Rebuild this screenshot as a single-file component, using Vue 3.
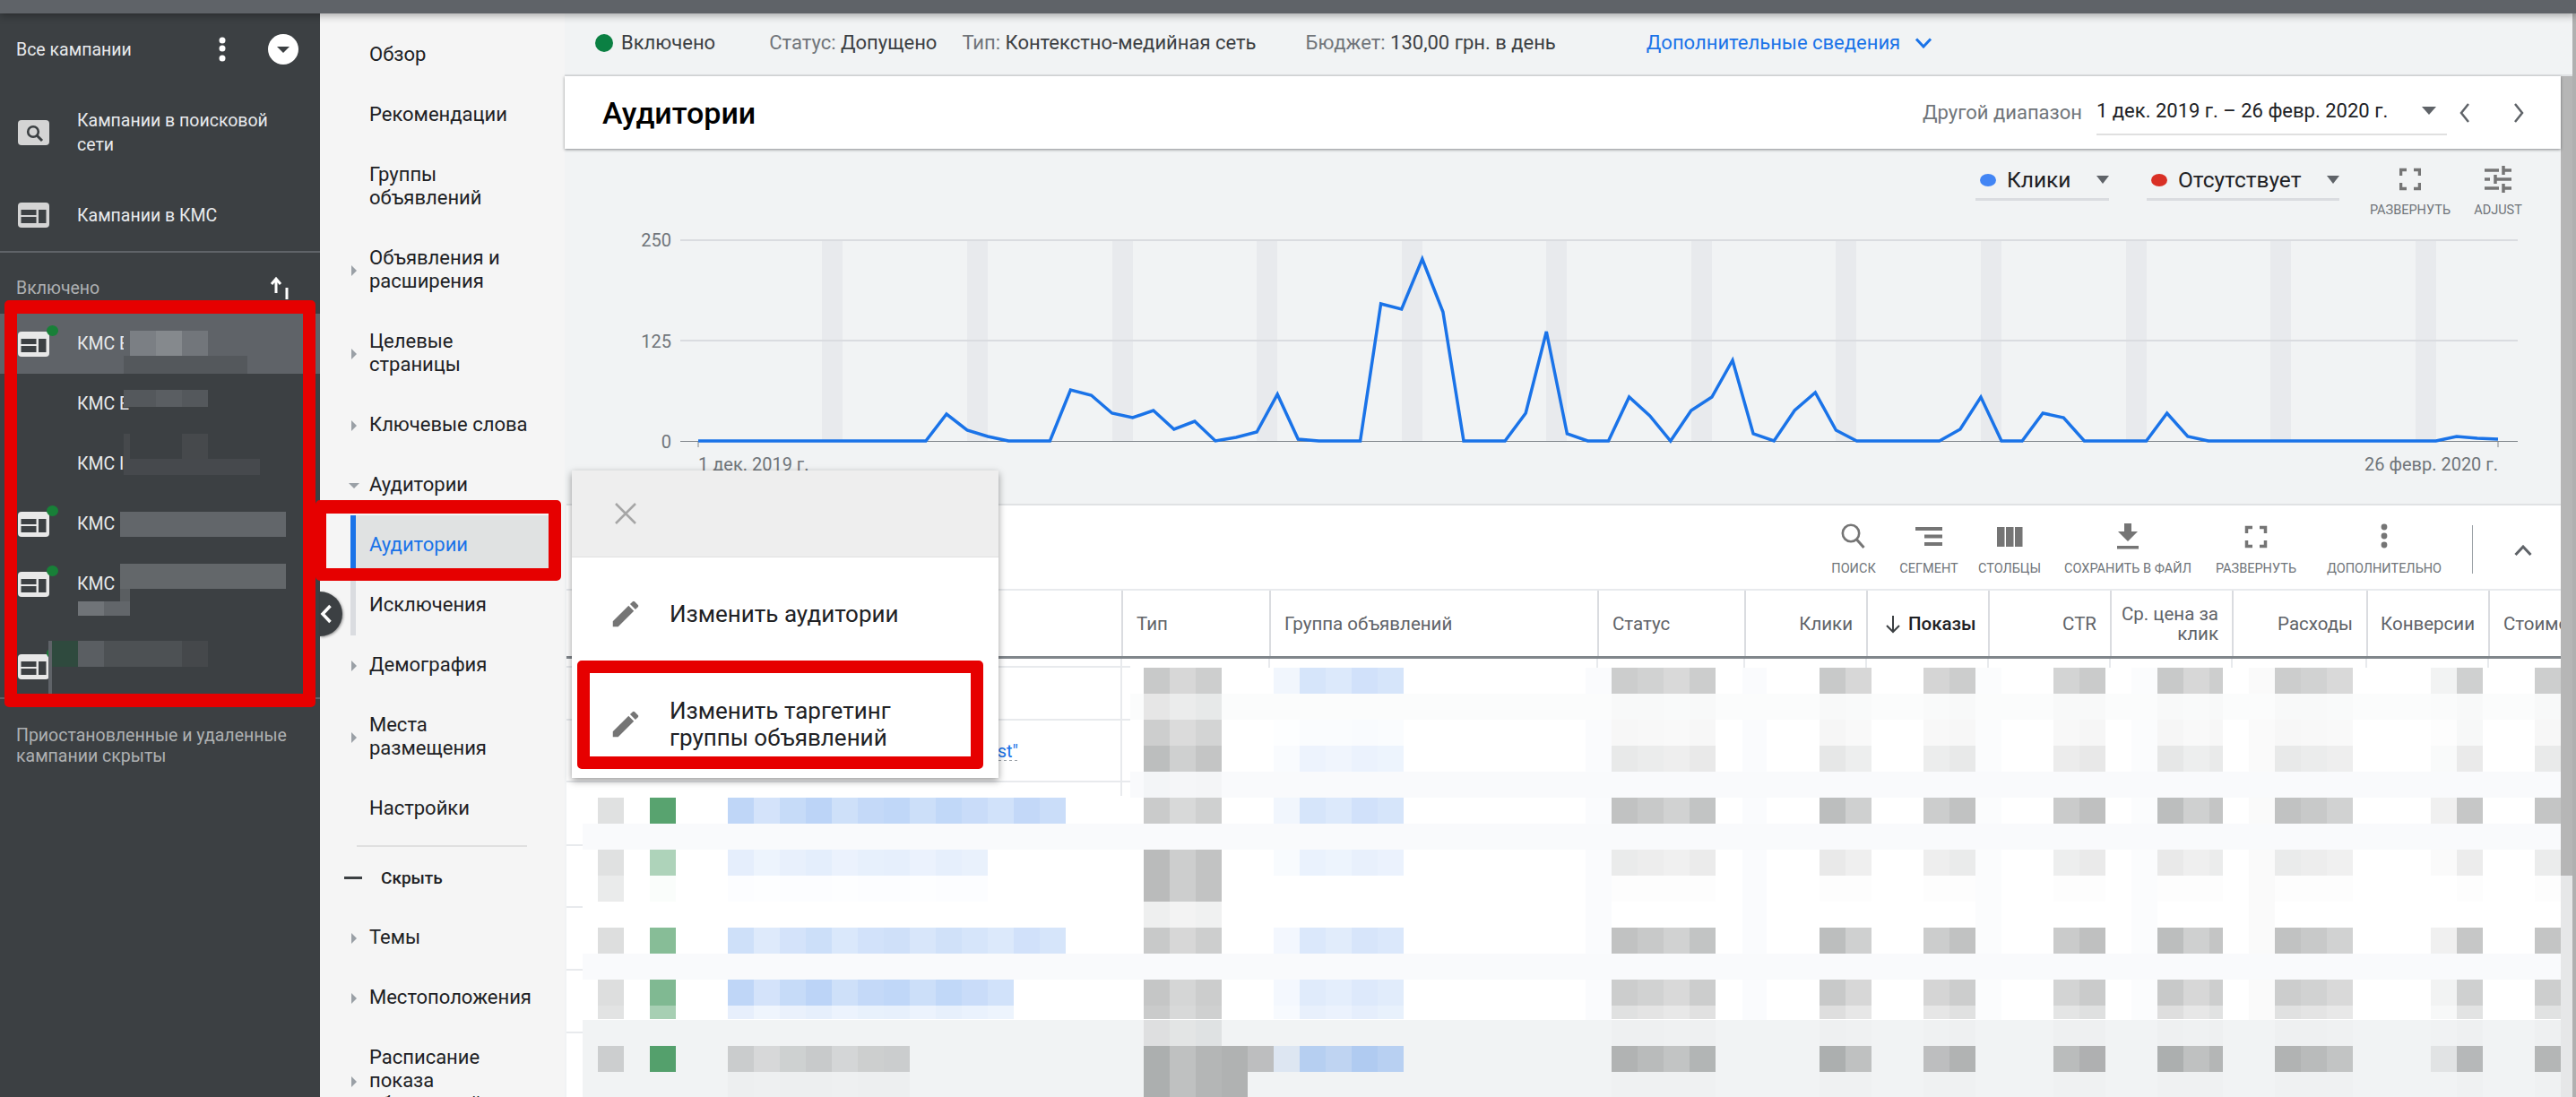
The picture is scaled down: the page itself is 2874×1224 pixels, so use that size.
<template>
  <div class="page">
    <div class="topbar"></div>
    <div class="body">
      <!-- левая панель кампаний -->
      <aside class="side">
        <div class="all-row">
          <span class="all-label">Все кампании</span>
          <svg class="kebab" width="8" height="28" viewBox="0 0 8 28"><circle cx="4" cy="4" r="3.5" /><circle cx="4" cy="13" r="3.5" /><circle cx="4" cy="24" r="3.5" /></svg>
          <span class="all-circle"><i></i></span>
        </div>
        <div class="type-row type-search">
          <svg class="camp-icon" width="35" height="28" viewBox="0 0 35 28">
            <rect width="35" height="28" rx="4" fill="#d4d4d4" />
            <circle cx="17" cy="13" r="5.8" fill="none" stroke="#3c4043" stroke-width="2.6" />
            <line x1="21" y1="17" x2="27" y2="23" stroke="#3c4043" stroke-width="3" />
          </svg>
          <span>Кампании в поисковой<br>сети</span>
        </div>
        <div class="type-row type-gdn">
          <svg class="camp-icon" width="35" height="28" viewBox="0 0 35 28">
            <rect width="35" height="28" rx="4" fill="#d4d4d4" />
            <path d="M3.5 8h17v6h-17zM3.5 16h17v7h-17zM23 8h8.5v15H23z" fill="#3c4043" />
          </svg>
          <span>Кампании в КМС</span>
        </div>
        <div class="enabled-row">
          <span>Включено</span>
          <svg width="26" height="28" viewBox="0 0 26 28"><path d="M7 19V5M2 9l5-6 5 6" fill="none" stroke="#fff" stroke-width="3" /><path d="M19 13v13" stroke="#fff" stroke-width="3" /></svg>
        </div>
        <div v-for="c in campaigns" :key="c.id" class="camp-row" :class="{ selected: c.selected, tall: c.tall }">
          <span class="camp-icon-wrap">
            <template v-if="c.icon">
              <svg class="camp-icon" width="35" height="28" viewBox="0 0 35 28">
                <rect width="35" height="28" rx="4" fill="#e8e8e8" />
                <path d="M3.5 8h17v6h-17zM3.5 16h17v7h-17zM23 8h8.5v15H23z" fill="#3c4043" />
              </svg>
              <i class="green-dot"></i>
            </template>
          </span>
          <span class="camp-name">{{ c.name }}</span>
        </div>
        <div class="paused-note">Приостановленные и удаленные кампании скрыты</div>
        <svg class="side-mosaic" width="357" height="500" viewBox="0 320 357 500">
          <rect v-for="(r, i) in sideCells" :key="i" :x="r[0]" :y="r[1]" :width="r[2]" :height="r[3]" :fill="r[4]" />
        </svg>
      </aside>

      <!-- меню разделов -->
      <nav class="subnav">
        <template v-for="n in navItems" :key="n.id">
          <div v-if="n.divider" class="nav-divider"></div>
          <div v-else-if="n.hide" class="nav-hide"><i></i><span>Скрыть</span></div>
          <div v-else class="nav-row" :class="{ active: n.active, marked: n.marked }">
            <i v-if="n.arrow" class="nav-arrow" :class="n.arrow"></i>
            <span class="nav-text">{{ n.text }}</span>
          </div>
        </template>
      </nav>

      <main class="main">
        <div class="status-bar">
          <i class="status-dot"></i>
          <span class="s-on">Включено</span>
          <span class="s-a"><em>Статус:</em> Допущено</span>
          <span class="s-b"><em>Тип:</em> Контекстно-медийная сеть</span>
          <span class="s-c"><em>Бюджет:</em> 130,00 грн. в день</span>
          <span class="s-more">Дополнительные сведения</span>
          <svg class="s-chev" width="20" height="12" viewBox="0 0 20 12"><path d="M2 1.5l8 8.5 8-8.5" fill="none" stroke="#1a73e8" stroke-width="3" /></svg>
        </div>
        <div class="work">
          <div class="content">
            <header class="title-bar">
              <h1>Аудитории</h1>
              <span class="range-label">Другой диапазон</span>
              <div class="range-select">
                <span>1 дек. 2019 г. – 26 февр. 2020 г.</span>
                <i class="tri"></i>
              </div>
              <svg class="pager" width="14" height="24" viewBox="0 0 14 24"><path d="M11 2L3 12l8 10" fill="none" stroke="#5f6368" stroke-width="2.5" /></svg>
              <svg class="pager next" width="14" height="24" viewBox="0 0 14 24"><path d="M3 2l8 10-8 10" fill="none" stroke="#5f6368" stroke-width="2.5" /></svg>
            </header>

            <section class="chart">
              <div class="legend">
                <div class="metric m-clicks"><i class="dot blue"></i><span>Клики</span><i class="tri"></i></div>
                <div class="metric m-none"><i class="dot red"></i><span>Отсутствует</span><i class="tri"></i></div>
                <div class="tool t-expand">
                  <svg width="24" height="24" viewBox="0 0 24 24"><path class="corners" d="M1.5 8V1.5H8M16 1.5h6.5V8M1.5 16v6.5H8M16 22.5h6.5V16" /></svg>
                  <span>РАЗВЕРНУТЬ</span>
                </div>
                <div class="tool t-adjust">
                  <svg width="30" height="30" viewBox="0 0 30 30"><path class="corners" d="M0 5h16M21 0v10M21 5h9M0 15h6M12 10v10M12 15h18M0 25h16M21 20v10M21 25h9" /></svg>
                  <span>ADJUST</span>
                </div>
              </div>
              <svg class="plot" width="2227" height="307" viewBox="630 255 2227 307">
                <rect v-for="x in weekendBands" :key="x" :x="x" y="268" width="23" height="224" fill="#e8eaed" />
                <line x1="759" y1="268" x2="2809" y2="268" stroke="#dadce0" stroke-width="2" />
                <line x1="759" y1="380" x2="2809" y2="380" stroke="#dadce0" stroke-width="2" />
                <line x1="759" y1="492.5" x2="2809" y2="492.5" stroke="#80868b" />
                <polyline :points="chartPoints" fill="none" stroke="#1a73e8" stroke-width="3.5" />
                <text class="axis" x="749" y="275" text-anchor="end">250</text>
                <text class="axis" x="749" y="388" text-anchor="end">125</text>
                <text class="axis" x="749" y="500" text-anchor="end">0</text>
                <line x1="779" y1="493" x2="779" y2="499" stroke="#80868b" />
                <line x1="2787" y1="493" x2="2787" y2="499" stroke="#80868b" />
                <text class="axis" x="779" y="525">1 дек. 2019 г.</text>
                <text class="axis" x="2787" y="525" text-anchor="end">26 февр. 2020 г.</text>
              </svg>
            </section>

            <section class="table-card">
              <div class="toolbar">
                <div v-for="t in tableTools" :key="t.label" class="tb-item" :style="{ width: t.w + 'px' }">
                  <svg width="36" height="32" viewBox="0 0 36 32">
                    <g v-if="t.icon === 'search'"><circle cx="15" cy="12" r="9.2" fill="none" stroke="#757575" stroke-width="2.6" /><path d="M21.5 19l8 9" stroke="#757575" stroke-width="3" /></g>
                    <path v-else-if="t.icon === 'segment'" d="M3 5h30v4H3zM13 13.500h20v4H13zM13 22h20v4H13z" fill="#757575" />
                    <path v-else-if="t.icon === 'columns'" d="M4 5h8.500v22H4zM14 5h8.500v22H14zM24 5h8.500v22H24z" fill="#757575" />
                    <path v-else-if="t.icon === 'save'" d="M14 1h8v9h7L18 21 7 10h7zM6 26h24v3.500H6z" fill="#757575" />
                    <path v-else-if="t.icon === 'expand'" class="corners" transform="translate(6 4)" d="M1.500 8V1.500H8M16 1.500h6.500V8M1.500 16v6.500H8M16 22.500h6.500V16" />
                    <g v-else fill="#757575"><circle cx="18" cy="5" r="3.400" /><circle cx="18" cy="15" r="3.400" /><circle cx="18" cy="25" r="3.400" /></g>
                  </svg>
                  <span>{{ t.label }}</span>
                </div>
                <i class="tb-sep"></i>
                <svg class="tb-up" width="20" height="12" viewBox="0 0 20 12"><path d="M1.500 11L10 2l8.500 9" fill="none" stroke="#5f6368" stroke-width="3" /></svg>
              </div>

              <div class="thead">
                <div class="th"></div>
                <div class="th">Тип</div>
                <div class="th">Группа объявлений</div>
                <div class="th">Статус</div>
                <div class="th right">Клики</div>
                <div class="th sorted">
                  <svg width="20" height="24" viewBox="0 0 20 24"><path d="M10 3v18M3 14l7 7 7-7" fill="none" stroke="#3c4043" stroke-width="2" /></svg>
                  <b>Показы</b>
                </div>
                <div class="th right">CTR</div>
                <div class="th right">Ср. цена за<br>клик</div>
                <div class="th right">Расходы</div>
                <div class="th right">Конверсии</div>
                <div class="th clip">Стоимость</div>
              </div>

              <svg class="tbody" width="2225" height="489" viewBox="632 735 2225 489">
                <rect x="632" y="735" width="2225" height="489" fill="#fff" />
                <g stroke="#e8eaed" stroke-width="2">
                  <line v-for="y in rowLines" :key="y" x1="632" :y1="y" x2="1261" :y2="y" />
                  <line x1="1251" y1="735" x2="1251" y2="888" />
                  <line x1="1416" y1="735" x2="1416" y2="745" />
                  <line v-for="x in headLines" :key="x" :x1="x" y1="735" :x2="x" y2="745" />
                </g>
                <text class="cell-link" x="1136" y="845" text-anchor="end">st"</text>
                <line x1="1114" y1="848" x2="1136" y2="848" stroke="#9aa0a6" stroke-dasharray="3 3" />
                <rect x="650" y="888" width="611" height="336" fill="#fff" />
                <rect v-for="b in mosaicBands" :key="b.key" :x="b.x" :y="b.y" :width="b.w" :height="b.h" :fill="b.c" />
                <rect v-for="c in mosaicCells" :key="c.key" :x="c.x" :y="c.y" :width="c.w" :height="c.h" :fill="c.c" :fill-opacity="c.o" />
              </svg>
            </section>
          </div>
          <div class="scrollbar"></div>
        </div>
      </main>
      <div class="edge"></div>
    </div>

    <!-- поверх контента -->
    <div class="collapse-tab">
      <svg width="14" height="22" viewBox="0 0 14 22"><path d="M11.500 2L3 11l8.500 9" fill="none" stroke="#fff" stroke-width="3.500" /></svg>
    </div>

    <div class="popup">
      <div class="popup-head">
        <svg width="26" height="24" viewBox="0 0 26 24"><path d="M2 1l22 22M24 1L2 23" fill="none" stroke="#a6a6a6" stroke-width="2.500" /></svg>
      </div>
      <div v-for="p in popupItems" :key="p" class="popup-item">
        <svg width="38" height="38" viewBox="0 0 24 24"><path d="M3 17.250V21h3.750L17.810 9.940l-3.750-3.750L3 17.250zM20.710 7.040a1 1 0 000-1.410l-2.340-2.340a1 1 0 00-1.410 0l-1.830 1.830 3.750 3.750 1.830-1.830z" fill="#757575" /></svg>
        <span>{{ p }}</span>
      </div>
    </div>

    <div class="mark mark-campaigns"></div>
    <div class="mark mark-nav"></div>
    <div class="mark mark-item"></div>
  </div>
</template>

<script setup>
const campaigns = [
  { id: 1, name: 'КМС Е', icon: true, selected: true },
  { id: 2, name: 'КМС Е' },
  { id: 3, name: 'КМС I' },
  { id: 4, name: 'КМС', icon: true },
  { id: 5, name: 'КМС', icon: true },
  { id: 6, name: '', icon: true, tall: true }
]

const sideCells = [
  [138, 369, 138, 28, '#5f6368'], [145, 369, 29, 28, '#7b7f84'], [174, 369, 29, 28, '#85898d'], [203, 369, 29, 28, '#72767b'],
  [138, 397, 138, 20, '#54585c'],
  [138, 435, 94, 19, '#54585c'], [174, 435, 29, 19, '#5a5e62'],
  [138, 484, 7, 28, '#46494c'], [203, 484, 29, 28, '#46494c'],
  [138, 512, 152, 18, '#46494d'],
  [134, 571, 185, 28, '#62666a'],
  [134, 629, 185, 28, '#63676a'], [134, 657, 11, 30, '#5a5e61'],
  [87, 671, 58, 16, '#62666a'], [87, 671, 29, 16, '#707478'],
  [54, 715, 4, 60, '#5f6368'],
  [58, 715, 29, 29, '#2f4a3e'], [87, 715, 29, 29, '#5a5e62'], [116, 715, 87, 29, '#4d5154'], [203, 715, 29, 29, '#45484b']
]

const navItems = [
  { id: 1, text: 'Обзор' },
  { id: 2, text: 'Рекомендации' },
  { id: 3, text: 'Группы\nобъявлений' },
  { id: 4, text: 'Объявления и\nрасширения', arrow: 'right' },
  { id: 5, text: 'Целевые\nстраницы', arrow: 'right' },
  { id: 6, text: 'Ключевые слова', arrow: 'right' },
  { id: 7, text: 'Аудитории', arrow: 'down' },
  { id: 8, text: 'Аудитории', active: true },
  { id: 9, text: 'Исключения', marked: true },
  { id: 10, text: 'Демография', arrow: 'right' },
  { id: 11, text: 'Места\nразмещения', arrow: 'right' },
  { id: 12, text: 'Настройки' },
  { id: 13, divider: true },
  { id: 14, hide: true },
  { id: 15, text: 'Темы', arrow: 'right' },
  { id: 16, text: 'Местоположения', arrow: 'right' },
  { id: 17, text: 'Расписание\nпоказа\nобъявлений', arrow: 'right' }
]

// значения графика в пикселях: y точки для каждого дня
const chartY = [
  492, 492, 492, 492, 492, 492, 492, 492, 492, 492, 492, 492,
  462, 480, 487, 492, 492, 492, 435, 441, 461, 466, 458, 479, 470,
  492, 488, 482, 440, 490, 492, 492, 492, 339, 345, 289, 348,
  492, 492, 492, 461, 370, 484, 492, 492, 443, 464, 492, 458, 443,
  402, 484, 492, 458, 438, 480, 492, 492, 492, 492, 492, 479, 443,
  492, 492, 461, 466, 492, 492, 492, 492, 461, 487, 492,
  492, 492, 492, 492, 492, 492, 492, 492, 492, 492, 492, 487, 489, 490
]
const chartPoints = chartY.map((y, i) => `${(779 + i * 23.08).toFixed(1)},${y}`).join(' ')
const weekendBands = Array.from({ length: 12 }, (_, k) => Math.round(779 + 23.08 * (6 + 7 * k)))

const tableTools = [
  { label: 'ПОИСК', icon: 'search', w: 84 },
  { label: 'СЕГМЕНТ', icon: 'segment', w: 84 },
  { label: 'СТОЛБЦЫ', icon: 'columns', w: 96 },
  { label: 'СОХРАНИТЬ В ФАЙЛ', icon: 'save', w: 168 },
  { label: 'РАЗВЕРНУТЬ', icon: 'expand', w: 118 },
  { label: 'ДОПОЛНИТЕЛЬНО', icon: 'more', w: 168 }
]

const popupItems = ['Изменить аудитории', 'Изменить таргетинг группы объявлений']

const rowLines = [744, 803, 872, 943, 1012, 1082, 1152]
const headLines = [1782, 1946, 2082, 2218, 2354, 2490, 2640, 2776]

// размытые строки таблицы
const mosaicRows = [
  { y: 745, h: 29, o: 0.5, t: 0.5, ag: 0.32 },
  { y: 774, h: 29, o: 0.03, t: 0.2, ag: 0 },
  { y: 803, h: 29, o: 0.08, t: 0.45, ag: 0.04 },
  { y: 832, h: 29, o: 0.22, t: 0.6, ag: 0.14 },
  { y: 861, h: 29, o: 0, t: 0.05, ag: 0 },
  { y: 890, h: 29, o: 0.6, t: 0.48, ag: 0.32, chk: 0.3, gr: 0.72, name: 0.42, n: 13 },
  { y: 948, h: 29, o: 0.2, t: 0.62, ag: 0.16, chk: 0.3, gr: 0.35, name: 0.17, n: 10 },
  { y: 977, h: 29, o: 0.02, t: 0.62, ag: 0, chk: 0.2, gr: 0.02, name: 0.02, n: 10 },
  { y: 1006, h: 29, o: 0, t: 0.15, ag: 0 },
  { y: 1035, h: 29, o: 0.6, t: 0.5, ag: 0.28, chk: 0.33, gr: 0.52, name: 0.32, n: 13 },
  { y: 1093, h: 29, o: 0.5, t: 0.52, ag: 0.24, chk: 0.33, gr: 0.55, name: 0.42, n: 11 },
  { y: 1122, h: 15, o: 0.3, t: 0.48, ag: 0.18, chk: 0.28, gr: 0.38, name: 0.16, n: 11 },
  { y: 1138, h: 29, o: 0.03, t: 0.2, ag: 0 },
  { y: 1167, h: 29, o: 0.72, t: 0.72, tn: 5, ag: 0.5, chk: 0.42, gr: 0.72, gray: 0.42, n: 7 },
  { y: 1196, h: 28, o: 0.02, t: 0.72, tn: 4, ag: 0, gray: 0.04, n: 7 }
]
const grayCols = [
  { x: 1798, n: 4 }, { x: 2030, n: 2 }, { x: 2146, n: 2 }, { x: 2291, n: 2 },
  { x: 2407, n: 2.5 }, { x: 2538, n: 3 }, { x: 2741, n: 1 }, { x: 2828, n: 1 }
]
const jitter = [1, 0.88, 1.06, 0.72, 0.94, 1.1, 0.8, 0.98, 1.04, 0.84, 1.02, 0.9, 0.76]

const mosaicCells = []
const pushCells = (x, y, h, n, color, o, flat) => {
  for (let i = 0; i < Math.ceil(n); i++) {
    const k = flat ? 1 : jitter[(i + Math.round(x / 29)) % jitter.length]
    mosaicCells.push({
      key: `${x}-${y}-${i}`,
      x: x + i * 29,
      y,
      w: n - i < 1 ? 29 * (n - i) : 29,
      h,
      c: color,
      o: Math.min(1, o * k)
    })
  }
}
for (const r of mosaicRows) {
  if (r.chk) pushCells(667, r.y, r.h, 1, '#9a9c9c', r.chk)
  if (r.gr) pushCells(725, r.y, r.h, 1, '#188038', r.gr, true)
  if (r.name) pushCells(812, r.y, r.h, r.n, '#6fa3ee', r.name)
  if (r.gray) pushCells(812, r.y, r.h, r.n, '#9a9c9c', r.gray)
  pushCells(1276, r.y, r.h, r.tn || 3, '#9a9c9c', r.t)
  if (r.ag) {
    pushCells(1421, r.y, r.h, 1, '#6fa3ee', r.ag * 0.3)
    pushCells(1450, r.y, r.h, 4, '#6fa3ee', r.ag)
  }
  if (r.o) {
    for (const c of grayCols) pushCells(c.x, r.y, r.h, c.n, '#9a9c9c', r.o)
    pushCells(2712, r.y, r.h, 1, '#9a9c9c', r.o * 0.35)
  }
}

const mosaicBands = [
  { key: 'v1', x: 1769, y: 745, w: 29, h: 479, c: '#fafbfd' },
  { key: 'v2', x: 1944, y: 745, w: 27, h: 479, c: '#fafbfd' },
  { key: 'v3', x: 2204, y: 745, w: 29, h: 479, c: '#fbfcfd' },
  { key: 'v4', x: 2378, y: 745, w: 29, h: 479, c: '#fbfcfd' },
  { key: 'v5', x: 2509, y: 745, w: 29, h: 479, c: '#fafafa' },
  { key: 'h1', x: 1261, y: 774, w: 1596, h: 29, c: '#fbfcfc' },
  { key: 'h2', x: 1261, y: 861, w: 1596, h: 29, c: '#f9fafc' },
  { key: 'h3', x: 650, y: 919, w: 2207, h: 29, c: '#f9fafc' },
  { key: 'h4', x: 650, y: 1064, w: 2207, h: 29, c: '#f9fafc' },
  { key: 'h5', x: 650, y: 1138, w: 2207, h: 86, c: '#f1f3f4' }
]
</script>

<style scoped>
.page {
  position: relative;
  width: 2874px;
  height: 1224px;
  overflow: hidden;
  display: flex;
  flex-direction: column;
  font-family: Roboto, "Noto Sans", sans-serif;
  background: #f1f3f4;
}

.topbar {
  height: 15px;
  flex: none;
  background: #5f6368;
  box-shadow: 0 2px 10px rgba(0, 0, 0, 0.35);
  position: relative;
  z-index: 3;
}

.body {
  flex: 1;
  display: flex;
  min-height: 0;
}

/* левая панель */
.side {
  position: relative;
  width: 357px;
  flex: none;
  background: #3c4043;
  color: #e8eaed;
  font-size: 19.5px;
  display: flex;
  flex-direction: column;
}

.side > div {
  box-sizing: border-box;
  flex: none;
}

.all-row {
  height: 80px;
  display: flex;
  align-items: center;
  padding: 0 24px 0 18px;
}

.all-label {
  flex: 1;
}

.kebab {
  fill: #fff;
  margin-right: 47px;
}

.all-circle {
  width: 34px;
  height: 34px;
  border-radius: 50%;
  background: #fff;
  display: flex;
  align-items: center;
  justify-content: center;
}

.all-circle i {
  border-left: 7px solid transparent;
  border-right: 7px solid transparent;
  border-top: 7px solid #3c4043;
}

.type-row {
  display: flex;
  align-items: center;
  padding-left: 20px;
  gap: 31px;
  line-height: 27px;
}

.type-search {
  height: 105px;
}

.type-gdn {
  height: 82px;
  border-bottom: 2px solid #5f6368;
}

.enabled-row {
  height: 68px;
  display: flex;
  align-items: flex-end;
  justify-content: space-between;
  padding: 0 30px 14px 18px;
  color: #aeb0b2;
  line-height: 24px;
}

.enabled-row span {
  margin-bottom: 2px;
}

.camp-row {
  position: relative;
  height: 67px;
  display: flex;
  align-items: center;
  padding-left: 20px;
  gap: 31px;
}

.camp-row.selected {
  background: #5f6368;
}

.camp-row.tall {
  height: 95px;
  align-items: flex-end;
  padding-bottom: 20px;
  border-bottom: 2px solid #5f6368;
}

.camp-icon-wrap {
  position: relative;
  width: 35px;
  height: 28px;
}

.camp-icon {
  display: block;
  flex: none;
}

.green-dot {
  position: absolute;
  left: 32px;
  top: -7px;
  width: 13px;
  height: 12px;
  border-radius: 50%;
  background: #188038;
}

.paused-note {
  padding: 29px 18px 0;
  color: #aeb0b2;
  line-height: 23px;
}

.side-mosaic {
  position: absolute;
  left: 0;
  top: 305px;
}

/* меню разделов */
.subnav {
  width: 273px;
  flex: none;
  padding-top: 13px;
  background: #f5f5f5;
  color: #202124;
  font-size: 22px;
}

.nav-row {
  position: relative;
  padding: 20px 0 21px 55px;
  line-height: 26px;
}

.nav-text {
  white-space: pre-line;
}

.nav-arrow {
  position: absolute;
  left: 35px;
  top: 50%;
  margin-top: -6px;
  border-top: 6px solid transparent;
  border-bottom: 6px solid transparent;
  border-left: 6px solid #9aa0a6;
}

.nav-arrow.down {
  left: 32px;
  margin-top: -3px;
  border-left: 6px solid transparent;
  border-right: 6px solid transparent;
  border-top: 6px solid #9aa0a6;
  border-bottom: 0;
}

.nav-row.active {
  margin: 0 18px 0 34px;
  padding-left: 15px;
  border-left: 6px solid #1a73e8;
  background: #e0e2e2;
  color: #1a73e8;
}

.nav-row.marked::before {
  content: "";
  position: absolute;
  left: 34px;
  top: 0;
  bottom: 0;
  width: 6px;
  background: #dadce0;
}

.nav-divider {
  height: 2px;
  margin: 7px 42px 0 41px;
  background: #e0e0e0;
}

.nav-hide {
  height: 68px;
  display: flex;
  align-items: center;
  padding-left: 27px;
  font-size: 19px;
  font-weight: 500;
}

.nav-hide i {
  width: 20px;
  height: 3px;
  margin-right: 21px;
  background: #3c4043;
}

/* основная часть */
.main {
  flex: 1;
  min-width: 0;
  display: flex;
  flex-direction: column;
}

.edge {
  width: 4px;
  flex: none;
  background: #b0b0b0;
}

.status-bar {
  height: 70px;
  flex: none;
  display: flex;
  align-items: center;
  padding: 0 0 3px 34px;
  box-sizing: border-box;
  font-size: 22px;
  color: #3c4043;
  border-bottom: 2px solid #e0e2e4;
}

.status-bar em {
  font-style: normal;
  color: #70757a;
}

.status-dot {
  width: 20px;
  height: 20px;
  margin-right: 9px;
  border-radius: 50%;
  background: #0b8043;
}

.s-a {
  margin-left: 60px;
}

.s-b {
  margin-left: 28px;
}

.s-c {
  margin-left: 55px;
}

.s-more {
  margin-left: 101px;
  color: #1a73e8;
}

.s-chev {
  margin-left: 16px;
}

.work {
  flex: 1;
  min-height: 0;
  display: flex;
}

.content {
  width: 2227px;
  flex: none;
}

.scrollbar {
  width: 13px;
  flex: none;
  background: linear-gradient(#b6b6b6 0, #b6b6b6 892px, #e6e7e8 892px);
}

.title-bar {
  height: 81px;
  display: flex;
  align-items: center;
  padding-left: 42px;
  background: #fff;
  box-shadow: 0 1px 3px rgba(60, 64, 67, 0.6);
  position: relative;
}

.title-bar h1 {
  flex: 1;
  margin: 0;
  font-size: 34px;
  font-weight: 500;
  color: #000;
}

.range-label {
  color: #70757a;
  font-size: 22px;
}

.range-select {
  width: 391px;
  height: 46px;
  margin: 5px 13px 0 16px;
  display: flex;
  align-items: flex-start;
  justify-content: space-between;
  padding: 6px 12px 0 0;
  box-sizing: border-box;
  border-bottom: 2px solid #e0e0e0;
  font-size: 22px;
  color: #202124;
}

.tri {
  display: block;
  border-left: 8px solid transparent;
  border-right: 8px solid transparent;
  border-top: 9px solid #5f6368;
  margin-top: 8px;
}

.pager {
  margin-right: 46px;
}

.pager.next {
  margin-right: 40px;
}

.chart {
  height: 396px;
}

.legend {
  height: 89px;
  display: flex;
  align-items: flex-start;
  justify-content: flex-end;
  padding-right: 44px;
}

.metric {
  height: 46px;
  margin-top: 12px;
  padding-top: 2px;
  display: flex;
  align-items: center;
  box-sizing: border-box;
  border-bottom: 3px solid #dadce0;
  font-size: 24.5px;
  color: #202124;
}

.metric .tri {
  border-left-width: 7px;
  border-right-width: 7px;
  border-top-width: 9px;
  margin: 0 0 0 auto;
}

.m-clicks {
  width: 149px;
  padding-left: 5px;
  margin-right: 42px;
}

.m-none {
  width: 215px;
  padding-left: 5px;
  margin-right: 34px;
}

.dot {
  width: 18px;
  height: 14px;
  margin-right: 12px;
  border-radius: 50%;
}

.dot.blue {
  background: #4285f4;
}

.dot.red {
  background: #d93025;
}

.tool {
  margin-top: 19px;
  display: flex;
  flex-direction: column;
  align-items: center;
  font-size: 14.5px;
  color: #70757a;
}

.tool svg {
  display: block;
  height: 30px;
}

.tool span {
  margin-top: 11px;
}

.t-expand {
  width: 90px;
  margin-right: 27px;
}

.t-adjust {
  width: 52px;
}

.corners {
  fill: none;
  stroke: #757575;
  stroke-width: 3.5;
}

.plot {
  display: block;
}

.axis {
  font-size: 20px;
  fill: #70757a;
}

.table-card {
  margin-left: 2px;
  border-top: 2px solid #e0e2e4;
}

.toolbar {
  height: 93px;
  display: flex;
  align-items: flex-start;
  justify-content: flex-end;
  background: #fff;
  border-bottom: 2px solid #e8eaed;
  position: relative;
}

.tb-item {
  padding-top: 19px;
  display: flex;
  flex-direction: column;
  align-items: center;
  flex: none;
  font-size: 14.5px;
  color: #70757a;
  white-space: nowrap;
}

.tb-item svg {
  display: block;
}

.tb-item span {
  margin-top: 11px;
}

.tb-sep {
  width: 1px;
  height: 54px;
  margin: 22px 46px 0 14px;
  background: #9aa0a6;
}

.tb-up {
  margin: 44px 32px 0 0;
}

.thead {
  display: grid;
  grid-template-columns: 619px 165px 366px 164px 136px 136px 136px 136px 150px 136px 81px;
  height: 73px;
  padding-top: 1px;
  box-sizing: content-box;
  margin-top: -1px;
  background: #fff;
  border-bottom: 3px solid #80868b;
  font-size: 20.5px;
  color: #5f6368;
}

.th {
  display: flex;
  align-items: center;
  padding: 0 15px;
  border-left: 2px solid #dadce0;
  line-height: 22px;
  box-sizing: border-box;
  min-width: 0;
}

.th:first-child {
  border-left: 0;
}

.th.right {
  justify-content: flex-end;
  text-align: right;
  white-space: nowrap;
  padding-left: 0;
}

.th.sorted {
  padding-left: 18px;
  padding-right: 14px;
  gap: 7px;
  color: #202124;
  overflow: hidden;
  white-space: nowrap;
}

.th.sorted svg {
  flex: none;
}

.th.sorted b {
  font-weight: 500;
  min-width: 0;
  overflow: hidden;
}

.th.clip {
  overflow: hidden;
  white-space: nowrap;
  padding-right: 0;
}

.tbody {
  display: block;
  shape-rendering: crispEdges;
}

.cell-link {
  font-size: 20px;
  fill: #1a73e8;
}

/* попап */
.popup {
  position: absolute;
  left: 638px;
  top: 525px;
  width: 476px;
  height: 343px;
  background: #fff;
  box-shadow: 0 3px 8px rgba(0, 0, 0, 0.4);
  display: flex;
  flex-direction: column;
  z-index: 4;
}

.popup-head {
  height: 97px;
  flex: none;
  display: flex;
  align-items: center;
  padding-left: 47px;
  background: #eeeeee;
  border-bottom: 1px solid #e0e0e0;
  box-sizing: border-box;
}

.popup-item {
  flex: 1;
  display: flex;
  align-items: center;
  gap: 30px;
  padding: 2px 50px 0 41px;
  font-size: 26px;
  line-height: 30px;
  color: #202124;
}

.popup-item svg {
  flex: none;
}

.collapse-tab {
  position: absolute;
  left: 357px;
  top: 660px;
  width: 25px;
  height: 50px;
  display: flex;
  align-items: center;
  background: #3c4043;
  border-radius: 0 25px 25px 0;
  box-shadow: 1px 1px 3px rgba(0, 0, 0, 0.4);
  z-index: 5;
}

/* красные рамки */
.mark {
  position: absolute;
  box-sizing: border-box;
  border: 14px solid #e60000;
  border-radius: 5px;
  z-index: 6;
}

.mark-campaigns {
  left: 5px;
  top: 335px;
  width: 347px;
  height: 454px;
  border-width: 15px 14px;
}

.mark-nav {
  left: 352px;
  top: 558px;
  width: 274px;
  height: 90px;
  border-width: 15px 14px 14px 12px;
}

.mark-item {
  left: 644px;
  top: 737px;
  width: 453px;
  height: 121px;
}
</style>

<style>
html,
body {
  margin: 0;
  background: #f1f3f4;
}
</style>
